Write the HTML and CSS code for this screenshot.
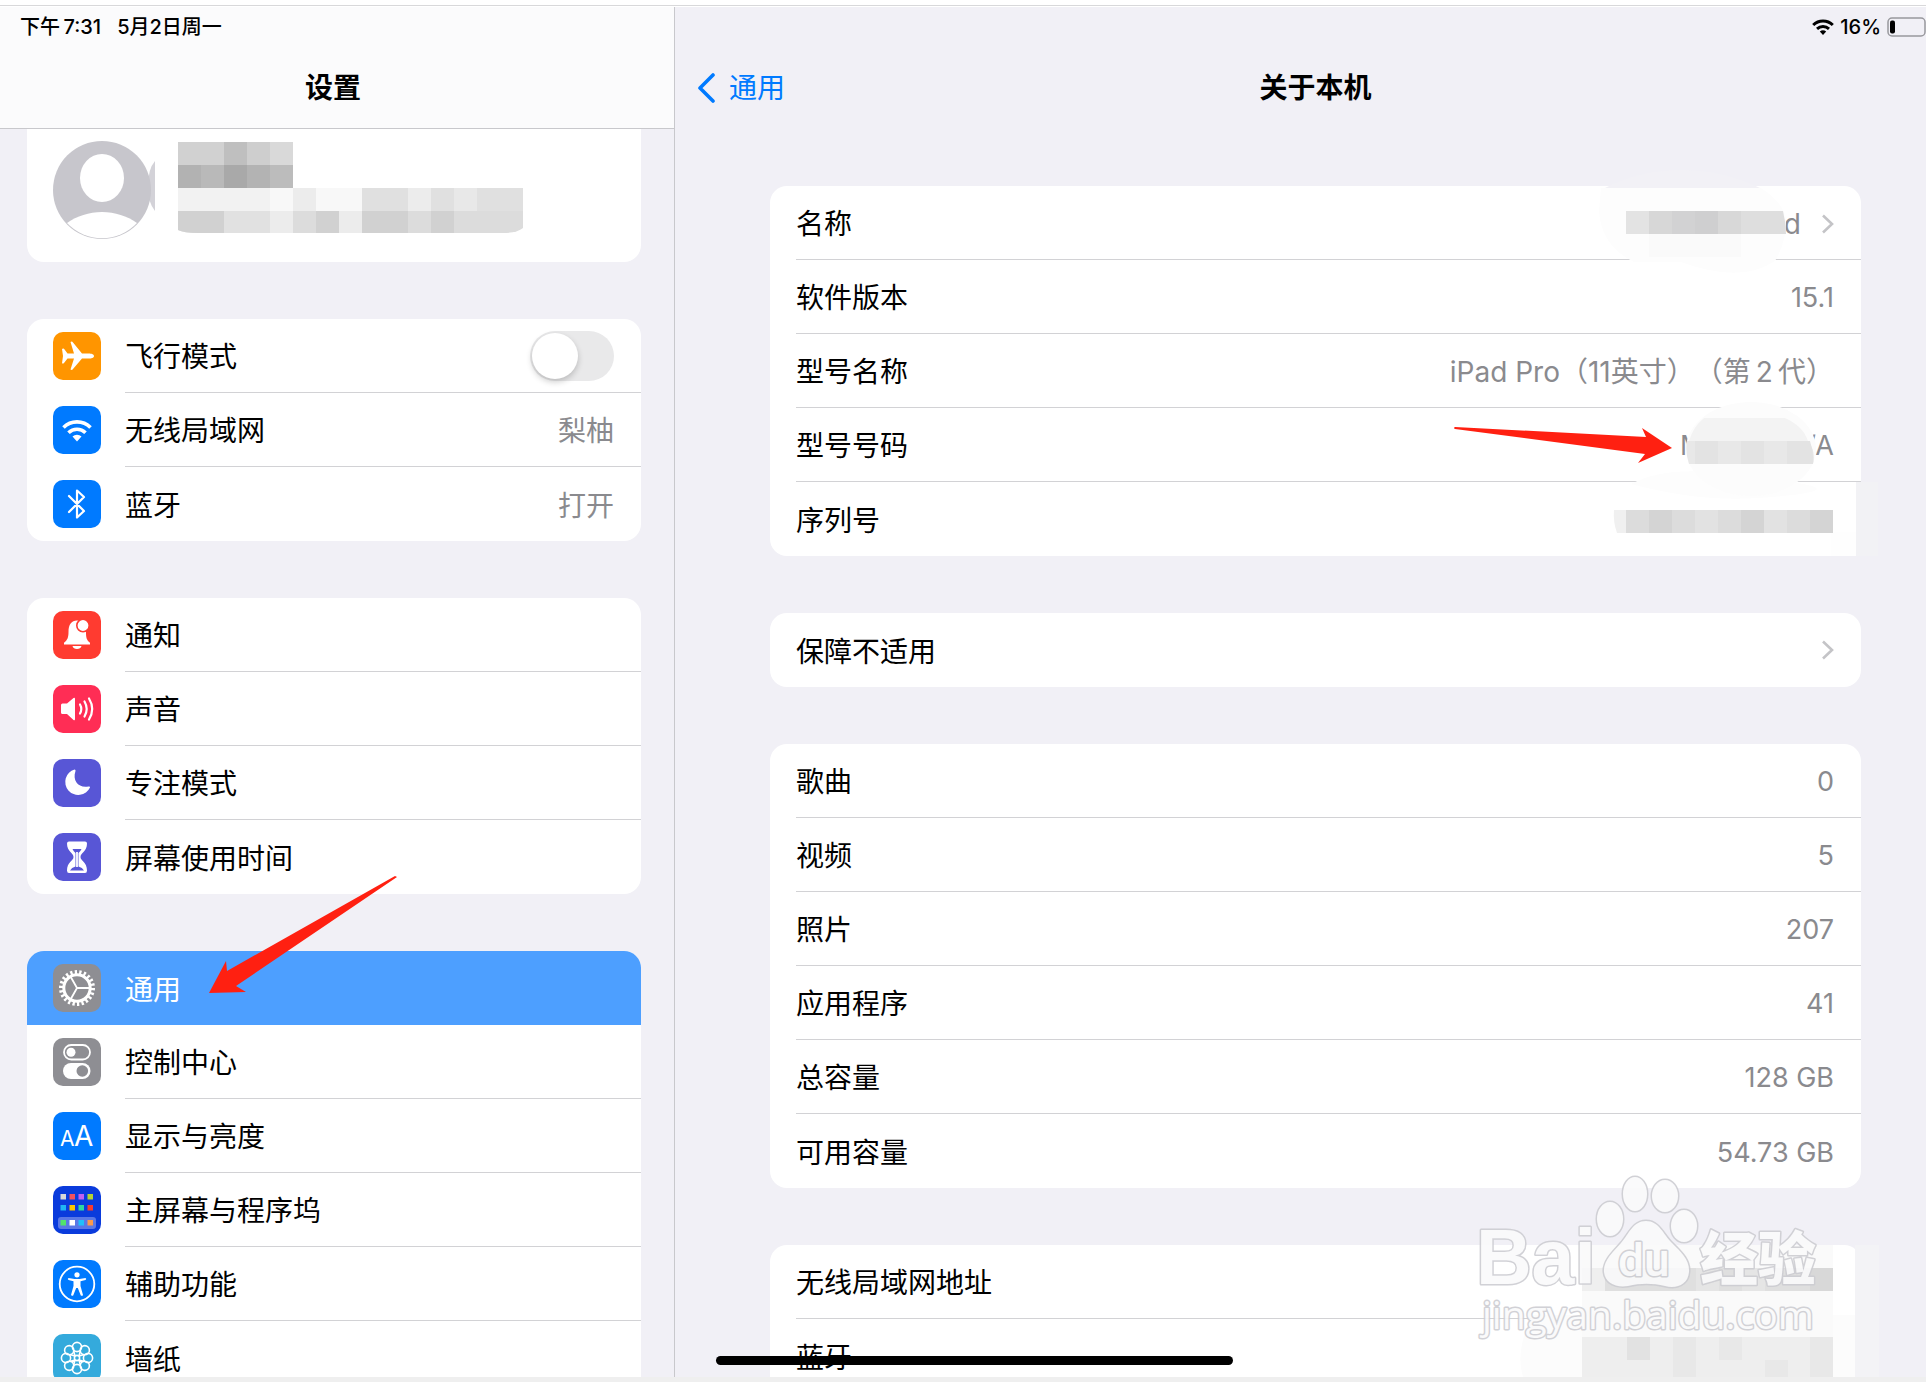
FILE: index.html
```
<!DOCTYPE html>
<html lang="zh-CN">
<head>
    <meta charset="UTF-8">
    <meta name="viewport" content="width=device-width, initial-scale=1.0">
    <title>设置</title>
    <link rel="stylesheet" href="styles.css">
</head>
<body>
<div class="screen">

    <!-- Sidebar -->
    <aside class="sidebar">
        <header class="sidebar-header">
            <div class="status"><span>下午&thinsp;7:31</span><span>5月2日周一</span></div>
            <h1 class="title">设置</h1>
        </header>

        <div class="sidebar-list">
            <a href="#profile" class="profile" aria-label="Apple ID">
                <svg class="avatar" viewBox="0 0 102 98">
                    <path d="M102 20v50q-7-8-7-25t7-25z" fill="#d3d2d8"/>
                    <circle cx="49" cy="49" r="49" fill="#c7c6cc"/>
                    <ellipse cx="49" cy="37" rx="22" ry="24" fill="#fff"/>
                    <path d="M14 82C24 75 36 71 49 71s25 4 35 11A48 48 0 0 1 14 82z" fill="#fff"/>
                </svg>
                <svg class="profile-mask" viewBox="0 0 345 91">
                    <path d="M0 0h46v23H0z" fill="#d1d1d1"/>
                    <path d="M46 0h23v23H46z" fill="#bfbfbf"/>
                    <path d="M69 0h23v23H69z" fill="#cecece"/>
                    <path d="M92 0h23v23H92z" fill="#d9d9d9"/>
                    <path d="M0 23h23v23H0z" fill="#b2b2b2"/>
                    <path d="M23 23h23v23H23z" fill="#b9b9b9"/>
                    <path d="M46 23h23v23H46z" fill="#a9a9a9"/>
                    <path d="M69 23h23v23H69z" fill="#b3b3b3"/>
                    <path d="M92 23h23v23H92z" fill="#bcbcbc"/>
                    <path d="M0 46h345v23H0z" fill="#f2f2f2"/>
                    <path d="M92 46h23v23H92zM138 46h46v23h-46z" fill="#f8f8f8"/>
                    <path d="M115 46h23v23h-23zM230 46h23v23h-23z" fill="#ececec"/>
                    <path d="M184 46h46v23h-46zM253 46h23v23h-23zM299 46h46v23h-46z" fill="#e0e0e0"/>
                    <path d="M276 46h23v23h-23z" fill="#e8e8e8"/>
                    <path d="M0 69h345v17q-6 5-20 5H20Q6 91 0 88z" fill="#dcdcdc"/>
                    <path d="M0 69h46v22H20Q6 91 0 88zM138 69h23v22h-23zM184 69h46v22h-46zM253 69h23v22h-23z" fill="#d1d1d1"/>
                    <path d="M46 69h46v22H46z" fill="#e1e1e1"/>
                    <path d="M92 69h23v22H92zM161 69h23v22h-23z" fill="#ececec"/>
                </svg>
            </a>

            <div class="card">
                <div class="row">
                    <svg class="icon orange" viewBox="0 0 48 48"><path fill="#fff" d="M41 24c0 2-3 2.600-5 2.600h-7L20 37q-1 1.500-2.500.5L21 26.600l-6.500-.1L11 31q-1 1-2 .2L10 24 9 17q1-1 2-.2l3.500 4.700 6.500-.1L17.500 10q1.500-1 2.500.5l9 10.900h7c2 0 5 .6 5 2.600z"/></svg>
                    <div class="row-body">
                        <label for="airplane">飞行模式</label>
                        <input type="checkbox" role="switch" id="airplane" class="switch">
                    </div>
                </div>
                <a href="#wifi" class="row">
                    <svg class="icon blue" viewBox="0 0 48 48"><g fill="none" stroke="#fff" stroke-width="3.600"><path d="M10.500 21.500a19 19 0 0 1 27 0"/><path d="M15.500 26.800a12 12 0 0 1 17 0"/></g><path fill="#fff" d="M19.500 30.500a6.500 6.500 0 0 1 9 0L24 35.500z"/></svg>
                    <div class="row-body"><span>无线局域网</span><span class="value">梨柚</span></div>
                </a>
                <a href="#bluetooth" class="row">
                    <svg class="icon blue" viewBox="0 0 48 48"><path fill="none" stroke="#fff" stroke-width="2.200" stroke-linejoin="round" stroke-linecap="round" d="M16 16l15 15-7 6.500v-27l7 6.500-15 15"/></svg>
                    <div class="row-body"><span>蓝牙</span><span class="value">打开</span></div>
                </a>
            </div>

            <div class="card">
                <a href="#notifications" class="row">
                    <svg class="icon red" viewBox="0 0 48 48">
                        <path fill="#fff" d="M11 33.500v-1.700c3.500-2.800 4.500-5.300 4.500-10.800 0-7.500 3-11.500 8.500-11.500s9 4 9 11.500c0 5.500 .5 8 4 10.800v1.700zM19.500 35h9c-.5 4-8.500 4-9 0z"/>
                        <circle cx="30" cy="14.500" r="6.200" fill="#fff" stroke="#ff3b30" stroke-width="1.600"/>
                    </svg>
                    <div class="row-body"><span>通知</span></div>
                </a>
                <a href="#sounds" class="row">
                    <svg class="icon pink" viewBox="0 0 48 48">
                        <path fill="#fff" d="M9.500 18.500H14l6.500-5.500q1.500-1 1.500 1v20q0 2-1.500 1L14 29H9.500Q8 29 8 27.500V20q0-1.500 1.500-1.500z"/>
                        <path fill="none" stroke="#fff" stroke-width="2.200" stroke-linecap="round" d="M27 19.500q2.600 4.500 0 9M31.500 16.500q4.400 7.500 0 15M36 13.500q6.400 10.500 0 21"/>
                    </svg>
                    <div class="row-body"><span>声音</span></div>
                </a>
                <a href="#focus" class="row">
                    <svg class="icon purple" viewBox="0 0 48 48"><path fill="#fff" d="M21.500 10.500A13 13 0 1 0 37 28.500q.2-1.500-1.500-1C26 29.500 19 22 22.500 12q.4-1.500-1-1.500z"/></svg>
                    <div class="row-body"><span>专注模式</span></div>
                </a>
                <a href="#screentime" class="row">
                    <svg class="icon purple" viewBox="0 0 48 48">
                        <path fill="#fff" d="M16 8.500h16q2 0 2 2c0 8-6.500 9.500-6.500 13.500S34 29 34 37.500q0 2.500-2 2.500H16q-2 0-2-2.500C14 29 20.500 28 20.500 24S14 18.500 14 10.500q0-2 2-2z"/>
                        <path fill="#5856d6" d="M19.500 16h9q-1 2.500-3 4v13.500q4 1 5.500 4H17q1.500-3 5.500-4V20q-2-1.500-3-4z"/>
                        <path stroke="#fff" stroke-width="1.800" d="M24 19v15"/>
                    </svg>
                    <div class="row-body"><span>屏幕使用时间</span></div>
                </a>
            </div>

            <div class="card">
                <a href="#general" class="row selected" aria-current="page">
                    <svg class="icon gray" viewBox="0 0 48 48">
                        <g fill="none" stroke="#fff">
                            <circle cx="24" cy="24" r="16" stroke-width="4" pathLength="88" stroke-dasharray="2 2"/>
                            <circle cx="24" cy="24" r="13.200" stroke-width="3"/>
                            <path stroke-width="1.800" d="M24 24h13M24 24l-6.500-11.500M24 24l-6.500 11.500"/>
                        </g>
                    </svg>
                    <div class="row-body"><span>通用</span></div>
                    <svg class="arrow-general" viewBox="0 0 190 120"><path fill="#ff2011" d="M0 118l17-32 1 10L186 1l2 1L27 111l10 6z"/></svg>
                </a>
                <a href="#control" class="row">
                    <svg class="icon gray" viewBox="0 0 48 48">
                        <rect x="11" y="7" width="26" height="14.500" rx="7.250" fill="none" stroke="#fff" stroke-width="1.800"/>
                        <circle cx="18" cy="14.200" r="4.500" fill="#fff"/>
                        <rect x="10" y="25" width="27.500" height="16" rx="8" fill="#fff"/>
                        <circle cx="29.300" cy="33" r="5.800" fill="#8e8e93"/>
                    </svg>
                    <div class="row-body"><span>控制中心</span></div>
                </a>
                <a href="#display" class="row">
                    <svg class="icon blue" viewBox="0 0 48 48"><text class="letters" x="7" y="34" font-size="21">A</text><text class="letters" x="21" y="34" font-size="28">A</text></svg>
                    <div class="row-body"><span>显示与亮度</span></div>
                </a>
                <a href="#home" class="row">
                    <svg class="icon navy" viewBox="0 0 48 48">
                        <rect x="5" y="31" width="38" height="12" rx="3" fill="#5a78e6"/>
                        <path fill="#d9d9d9" d="M7.500 8H13v5.500H7.500z"/><path fill="#f4515f" d="M16.500 8H22v5.500h-5.500z"/><path fill="#c160f2" d="M25.500 8H31v5.500h-5.500z"/><path fill="#b4d433" d="M34.500 8H40v5.500h-5.500z"/>
                        <path fill="#1fb6f4" d="M7.500 19H13v5.500H7.500z"/><path fill="#fbc800" d="M16.500 19H22v5.500h-5.500z"/><path fill="#2fd8a0" d="M25.500 19H31v5.500h-5.500z"/><path fill="#fb3a2c" d="M34.500 19H40v5.500h-5.500z"/>
                        <path fill="#52e46c" d="M7.500 34H13v5.500H7.500z"/><path fill="#fff" d="M16.500 34H22v5.500h-5.500z"/><path fill="#1fc0fb" d="M25.500 34H31v5.500h-5.500z"/><path fill="#fb9a4b" d="M34.500 34H40v5.500h-5.500z"/>
                    </svg>
                    <div class="row-body"><span>主屏幕与程序坞</span></div>
                </a>
                <a href="#accessibility" class="row">
                    <svg class="icon blue" viewBox="0 0 48 48">
                        <circle cx="24" cy="24" r="17.300" fill="none" stroke="#fff" stroke-width="1.800"/>
                        <circle cx="24" cy="14.800" r="2.600" fill="#fff"/>
                        <path fill="#fff" d="M15.500 18l6 1h5l6-1q1.500.8 0 2l-5 1.200V26l2.500 9q-.7 1.500-2.200.4L24.800 28h-1.600l-3 7.400q-1.500 1-2.200-.4l2.500-9v-4.800l-5-1.200q-1.500-1.200 0-2z"/>
                    </svg>
                    <div class="row-body"><span>辅助功能</span></div>
                </a>
                <a href="#wallpaper" class="row">
                    <svg class="icon cyan" viewBox="0 0 48 48">
                        <g fill="none" stroke="#fff" stroke-width="1.600">
                            <circle cx="24" cy="13" r="4.600"/><circle cx="31.800" cy="16.200" r="4.600"/><circle cx="35" cy="24" r="4.600"/><circle cx="31.800" cy="31.800" r="4.600"/>
                            <circle cx="24" cy="35" r="4.600"/><circle cx="16.200" cy="31.800" r="4.600"/><circle cx="13" cy="24" r="4.600"/><circle cx="16.200" cy="16.200" r="4.600"/>
                            <circle cx="24" cy="24" r="2.600"/>
                            <path d="M22 22l-5.500-1.500M22 22l-1.500-5.500M26 22l5.500-1.500M26 22l1.500-5.500M22 26l-5.500 1.500M22 26l-1.500 5.500M26 26l5.500 1.500M26 26l1.500 5.500"/>
                        </g>
                    </svg>
                    <div class="row-body"><span>墙纸</span></div>
                </a>
            </div>
        </div>
    </aside>

    <!-- About page -->
    <main class="main">
        <div class="status status-right">
            <svg class="status-wifi" viewBox="0 0 22 16"><g fill="none" stroke="#000" stroke-width="3"><path d="M1.200 6a14 14 0 0 1 19.600 0"/><path d="M5 9.800a9 9 0 0 1 12 0"/></g><path d="M7.800 12.600a5 5 0 0 1 6.400 0L11 16z"/></svg>
            <span>16%</span>
            <svg class="battery" viewBox="0 0 39 20"><rect x="1" y="1" width="37" height="18" rx="4" fill="none" stroke="#98989d" stroke-width="1.500"/><rect x="3" y="3.500" width="5" height="13" rx="2"/></svg>
        </div>
        <div class="nav">
            <a href="#general" class="back">
                <svg viewBox="0 0 18 30"><path d="M16 2L3 15l13 13" fill="none" stroke="#007aff" stroke-width="3.600" stroke-linecap="round" stroke-linejoin="round"/></svg>通用
            </a>
            <h2 class="title">关于本机</h2>
        </div>

        <div class="main-list">
            <div class="card">
                <a href="#name" class="row">
                    <div class="row-body">
                        <span>名称</span>
                        <span class="value">d<svg class="chevron" viewBox="0 0 13 20"><path d="M2 1.500l9 8.500-9 8.500" fill="none" stroke="#c4c4c7" stroke-width="2.600"/></svg></span>
                    </div>
                    <svg class="mask" viewBox="0 0 300 74">
                        <path d="M44 2C90-22 150-22 199 2z" fill="#f2f1f6"/>
                        <path d="M40 2h160q25 16 25 35T214 75Q180 98 120 76H73Q40 60 38 25z" fill="#fdfdfd"/>
                        <path d="M88 48h92v23H88z" fill="#fafafa"/>
                        <path d="M65 25h23v23H65z" fill="#e3e3e3"/>
                        <path d="M88 25h23v23H88z" fill="#d7d7d7"/>
                        <path d="M111 25h23v23h-23z" fill="#d2d2d3"/>
                        <path d="M134 25h23v23h-23z" fill="#cfcfd0"/>
                        <path d="M157 25h23v23h-23z" fill="#d8d8d8"/>
                        <path d="M180 25h42q3 12 3 23h-45z" fill="#dedede"/>
                    </svg>
                </a>
                <div class="row"><div class="row-body"><span>软件版本</span><span class="value number">15.1</span></div></div>
                <div class="row"><div class="row-body"><span>型号名称</span><span class="value">iPad Pro（11英寸）（第&thinsp;2&thinsp;代）</span></div></div>
                <div class="row">
                    <div class="row-body"><span>型号号码</span><span class="value number model"><span>M</span><span>/A</span></span></div>
                    <svg class="mask" viewBox="0 0 300 74">
                        <path d="M70 76Q100 60 150 64t92 12-45 14q-60 4-127-14z" fill="#fdfdfd"/>
                        <ellipse cx="190" cy="41" rx="65" ry="47" fill="#fcfcfc"/>
                        <path d="M143 10h81q18 8 23 23H128q4-14 15-23z" fill="#f3f3f3"/>
                        <path d="M126 33h121q8 10 5 23H128q-4-12-2-23z" fill="#e8e8e8"/>
                        <path d="M134 33h23v23h-23zM180 33h23v23h-23zM226 33h23q4 12 3 23h-26z" fill="#e3e3e3"/>
                        <path fill="#ff2011" d="M-106 19q-2 1 0 2l190 25-7 9 34-15-30-20 4 9z"/>
                    </svg>
                </div>
                <div class="row">
                    <div class="row-body"><span>序列号</span></div>
                    <svg class="mask" viewBox="0 0 300 74">
                        <path d="M295 0h22v74h-22z" fill="#f2f2f5"/>
                        <path d="M270 50h25v24h-25z" fill="#fefefe"/>
                        <path d="M53 28h12v23H56q-4-11-3-23z" fill="#f0f0f0"/>
                        <path d="M65 28h207v23H65z" fill="#dcdcdc"/>
                        <path d="M88 28h23v23H88zM180 28h23v23h-23zM249 28h23v23h-23z" fill="#d4d4d4"/>
                        <path d="M134 28h23v23h-23zM203 28h23v23h-23z" fill="#e2e2e2"/>
                    </svg>
                </div>
            </div>

            <div class="card">
                <a href="#coverage" class="row">
                    <div class="row-body"><span>保障不适用</span><svg class="chevron" viewBox="0 0 13 20"><path d="M2 1.500l9 8.500-9 8.500" fill="none" stroke="#c4c4c7" stroke-width="2.600"/></svg></div>
                </a>
            </div>

            <div class="card">
                <div class="row"><div class="row-body"><span>歌曲</span><span class="value number">0</span></div></div>
                <div class="row"><div class="row-body"><span>视频</span><span class="value number">5</span></div></div>
                <div class="row"><div class="row-body"><span>照片</span><span class="value number">207</span></div></div>
                <div class="row"><div class="row-body"><span>应用程序</span><span class="value number">41</span></div></div>
                <div class="row"><div class="row-body"><span>总容量</span><span class="value number">128 GB</span></div></div>
                <div class="row"><div class="row-body"><span>可用容量</span><span class="value number">54.73 GB</span></div></div>
            </div>

            <div class="card">
                <div class="row">
                    <div class="row-body"><span>无线局域网地址</span></div>
                    <svg class="mask" viewBox="-3 0 300 74">
                        <path d="M291 0h24v140h-24z" fill="#f3f3f6"/>
                        <path d="M-31 70h322v70H-38q-14-30 7-70z" fill="#fcfcfc"/>
                        <path d="M18 0h251v92H18z" fill="#fafafa"/>
                        <path d="M18 23h23v23H18z" fill="#efefef"/>
                        <path d="M41 23h205v23H41z" fill="#dfdfdf"/>
                        <path d="M132 23h23v23h-23zM178 23h23v23h-23z" fill="#e5e5e5"/>
                        <path d="M246 23h23v23h-23z" fill="#d8d8d8"/>
                        <path d="M18 92h251v48H18z" fill="#eeeeee"/>
                        <path d="M63 92h23v23H63z" fill="#e2e2e2"/>
                        <path d="M109 92h23v48h-23zM155 92h23v23h-23zM201 115h23v25h-23zM246 92h23v48h-23z" fill="#e8e8e8"/>
                    </svg>
                </div>
                <div class="row"><div class="row-body"><span>蓝牙</span></div></div>
            </div>
        </div>

        <!-- Watermark -->
        <svg class="watermark" viewBox="0 0 350 170">
            <g class="wm">
                <ellipse cx="137" cy="46" rx="13" ry="17"/>
                <ellipse cx="162" cy="21" rx="12" ry="17"/>
                <ellipse cx="192" cy="23" rx="13" ry="16"/>
                <ellipse cx="211" cy="53" rx="13" ry="16"/>
                <path d="M173 48c13 0 17 13 26 22s18 17 17 29c-1 13-13 17-24 14-13-3-24-3-37 0-12 2-23-3-24-14s9-20 17-29 12-22 25-22z"/>
                <text class="wm-logo" x="3" y="111">Bai</text>
                <text class="wm-du" x="145" y="103">du</text>
                <text class="wm-cn" x="227" y="107">经验</text>
                <text class="wm-url" x="9" y="156">jingyan.baidu.com</text>
            </g>
        </svg>
    </main>

    <div class="home-indicator"></div>
</div>
</body>
</html>
```
FILE: styles.css
```
*{
    margin: 0;
    padding: 0;
    box-sizing: border-box;
}
body {
    font-family: Inter, "Noto Sans CJK SC", sans-serif;
    font-size: 28px;
    line-height: 40px;
    text-spacing-trim: space-all;
    color: #000;
    background-color: #efefef;
    height: 100vh;
    overflow: hidden;
    padding-bottom: 5px;
}
a {
    color: inherit;
    text-decoration: none;
}
svg {
    display: block;
    flex-shrink: 0;
}

.screen {
    position: relative;
    display: flex;
    height: 100%;
    overflow: hidden;
    background-color: #f1f0f6;
    border-top: 5px solid #fff;
    box-shadow: inset 0 1px 0 #d8d8da, inset 0 2px 0 #fff;
    padding-top: 2px;
}

/* Status bar */
.status {
    display: flex;
    align-items: center;
    gap: 16px;
    height: 41px;
    padding: 0 20px 2px;
    font-size: 20px;
    font-weight: 500;
    line-height: 24px;
}
.status-right {
    justify-content: flex-end;
    gap: 6px;
    padding: 0 0 2px;
}
.status-wifi {
    width: 22px;
    height: 16px;
}
.battery {
    width: 39px;
    height: 20px;
}
.title {
    font-size: 28px;
    font-weight: 600;
    text-align: center;
    line-height: 80px;
}

/* Sidebar */
.sidebar {
    width: 35.05%;
    border-right: 1px solid #c8c8cc;
    display: flex;
    flex-direction: column;
    overflow: hidden;
}
.sidebar-header {
    background-color: #fbfbfc;
    border-bottom: 1px solid #c8c8cc;
}
.sidebar-header .title {
    padding-right: 8px;
}
.sidebar-list {
    display: flex;
    flex-direction: column;
    gap: 57px;
    padding: 0 33px 0 27px;
}
.profile {
    display: flex;
    align-items: flex-start;
    gap: 23px;
    height: 133px;
    padding: 12px 26px;
    background-color: #fff;
    border-radius: 0 0 17px 17px;
}
.avatar {
    width: 102px;
    height: 98px;
}
.profile-mask {
    width: 345px;
    height: 91px;
    margin-top: 1px;
}

/* Grouped rows */
.card {
    background-color: #fff;
    border-radius: 17px;
}
.row {
    position: relative;
    display: flex;
    align-items: center;
    gap: 24px;
    height: 74px;
    padding-left: 26px;
}
.row-body {
    flex: 1;
    display: flex;
    align-items: center;
    justify-content: space-between;
    height: 100%;
    padding-right: 27px;
    border-bottom: 1px solid #d2d2d5;
}
.row-body > span,
.row-body > label {
    padding-top: 3px;
}
.row:last-child .row-body {
    border-bottom: none;
}
.selected {
    background-color: #4d9fff;
    border-radius: 17px 17px 0 0;
    color: #fff;
}
.selected .row-body {
    border-bottom: none;
}
.value {
    display: flex;
    align-items: center;
    gap: 20px;
    color: #8a8a8e;
}
.number {
    font-size: 27px;
}
.model {
    justify-content: space-between;
    width: 154px;
}
.chevron {
    width: 13px;
    height: 20px;
}

/* Icons */
.icon {
    width: 48px;
    height: 48px;
    border-radius: 10px;
}
.orange { background-color: #ff9500; }
.blue { background-color: #007aff; }
.red { background-color: #ff3b30; }
.pink { background-color: #ff2d55; }
.purple { background-color: #5856d6; }
.gray { background-color: #8e8e93; }
.navy { background-color: #0a3bdc; }
.cyan { background-color: #34aadc; }
.letters {
    fill: #fff;
}

/* Switch */
.switch {
    appearance: none;
    width: 84px;
    height: 50px;
    border-radius: 25px;
    background-color: #e9e9ea;
    padding: 2px;
    cursor: pointer;
}
.switch::before {
    content: "";
    display: block;
    width: 46px;
    height: 46px;
    border-radius: 50%;
    background-color: #fff;
    box-shadow: 0 3px 6px rgba(0, 0, 0, 0.2);
}
.switch:checked {
    background-color: #34c759;
}
.switch:checked::before {
    margin-left: 34px;
}

/* Main */
.main {
    position: relative;
    flex: 1;
    overflow: hidden;
}
.nav {
    display: grid;
    grid-template-columns: 95px 1fr;
    padding: 0 65px 0 0;
    height: 80px;
    margin-bottom: 58px;
}
.back {
    display: flex;
    align-items: center;
    gap: 14px;
    padding-left: 22px;
    white-space: nowrap;
    color: #007aff;
}
.back svg {
    width: 18px;
    height: 30px;
}
.main-list {
    display: flex;
    flex-direction: column;
    gap: 57px;
    padding: 0 65px 0 95px;
}

/* Overlays */
.mask {
    position: absolute;
    top: 0;
    right: 0;
    width: 300px;
    height: 74px;
    overflow: visible;
    z-index: 1;
    pointer-events: none;
}
.arrow-general {
    position: absolute;
    left: 182px;
    bottom: 30px;
    width: 190px;
    height: 120px;
    pointer-events: none;
}
.watermark {
    position: absolute;
    right: 103px;
    bottom: 34px;
    width: 350px;
    height: 170px;
    z-index: 2;
    pointer-events: none;
}
.wm {
    fill: #fafafb;
    stroke: #cdcdd2;
    stroke-width: 3px;
    stroke-linejoin: round;
    paint-order: stroke;
    opacity: 0.9;
}
.wm-logo {
    font: 700 77px "Liberation Sans", Arial, sans-serif;
}
.wm-du {
    font: 500 46px Roboto, sans-serif;
}
.wm-cn {
    font: 900 58px "Noto Sans CJK SC", sans-serif;
}
.wm-url {
    font: 400 39px "Open Sans", sans-serif;
}
.home-indicator {
    position: absolute;
    left: 716px;
    bottom: 12px;
    width: 517px;
    height: 9px;
    border-radius: 5px;
    background-color: #000;
    z-index: 3;
}
```
